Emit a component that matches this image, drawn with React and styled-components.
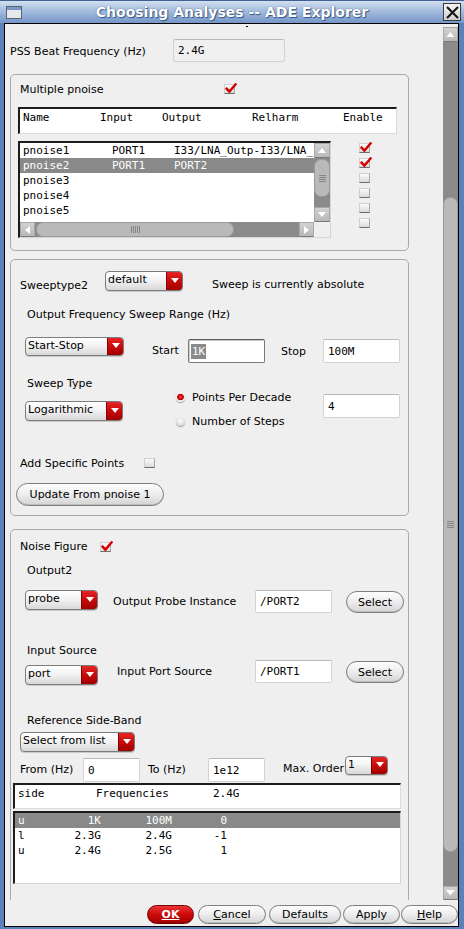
import React from "react";
import styled, { createGlobalStyle } from "styled-components";

const GlobalStyle = createGlobalStyle`
  html, body { margin: 0; padding: 0; }
  body {
    background: #5c80b8;
    font-family: "DejaVu Sans", "Liberation Sans", sans-serif;
    font-size: 11px;
    color: #000;
  }
  * { box-sizing: border-box; }
`;

const Window = styled.div`
  width: 464px;
  height: 929px;
  display: flex;
  flex-direction: column;
  overflow: hidden;
  background: #5c80b8;
`;

const TitleBar = styled.div`
  flex: none;
  height: 23px;
  display: grid;
  grid-template-columns: 1fr auto 1fr;
  align-items: center;
  background: linear-gradient(to bottom, #d3e0f0 0%, #a9c0e0 40%, #7596c8 100%);
  border-top: 1px solid #3f5f92;
`;

const TitleText = styled.div`
  font: bold 14px "DejaVu Sans", sans-serif;
  line-height: 22px;
  color: #fff;
  white-space: nowrap;
  text-shadow: 0 0 1px #2c4a78, 1px 1px 1px #3a5886;
`;

const IconSlot = styled.div`
  justify-self: start;
  margin-left: 6px;
  display: flex;
`;

const CloseBox = styled.div`
  justify-self: end;
  margin-right: 3px;
  width: 18px;
  height: 18px;
  display: flex;
  align-items: center;
  justify-content: center;
  border: 1px solid #3a3a3a;
  background: linear-gradient(to bottom, #f4f4f4, #cfcfcf);
`;

const FrameOuter = styled.div`
  flex: 1;
  min-height: 0;
  display: flex;
  flex-direction: column;
  padding: 0 5px 2px 4px;
`;

const Frame = styled.div`
  flex: 1;
  min-height: 0;
  display: flex;
  flex-direction: column;
  border: 1px solid #000;
  background: #efefef;
`;

const Main = styled.div`
  flex: none;
  height: 876px;
  display: flex;
`;

const Viewport = styled.div`
  flex: 1;
  min-width: 0;
  overflow: hidden;
  display: flex;
  flex-direction: column;
  align-items: flex-start;
`;

const ButtonBar = styled.div`
  flex: 1;
  display: flex;
  align-items: flex-start;
  justify-content: flex-end;
  padding-top: 5px;
`;

/* ---------- generic layout pieces ---------- */

const Row = styled.div`
  flex: none;
  display: flex;
  align-items: flex-start;
  height: ${(p) => (p.$h ? `${p.$h}px` : "auto")};
  margin: ${(p) => p.$mt || 0}px 0 0 ${(p) => p.$ml || 0}px;
`;

const Label = styled.span`
  flex: none;
  display: block;
  white-space: nowrap;
  font-size: 11px;
  line-height: 13px;
  width: ${(p) => (p.$w ? `${p.$w}px` : "auto")};
  margin: ${(p) => p.$mt || 0}px 0 0 ${(p) => p.$ml || 0}px;
`;

const Dot = styled.span`
  display: block;
  width: 2px;
  height: 1px;
  background: #000;
  margin: 2px 0 0 241px;
`;

const Section = styled.div`
  flex: none;
  width: 399px;
  height: ${(p) => p.$h}px;
  margin: ${(p) => p.$mt}px 0 0 5px;
  border: 1px solid #a9a9a9;
  border-radius: 5px;
  display: flex;
  flex-direction: column;
  align-items: flex-start;
`;

/* ---------- controls ---------- */

const Field = styled.div`
  flex: none;
  width: ${(p) => p.$w}px;
  height: ${(p) => p.$h || 23}px;
  margin: ${(p) => p.$mt || 0}px 0 0 ${(p) => p.$ml || 0}px;
  display: flex;
  align-items: center;
  padding-left: ${(p) => (p.$focus ? 2 : 4)}px;
  font: 11px "DejaVu Sans Mono", monospace;
  white-space: nowrap;
  background: ${(p) => (p.$ro ? "#f0f0f0" : "#fff")};
  border: 1px solid ${(p) => (p.$focus ? "#7a7a7a" : "#d2d2d2")};
  border-top-color: ${(p) => (p.$focus ? "#5a5a5a" : "#b8b8b8")};
  border-radius: ${(p) => (p.$ro ? 3 : 2)}px;
  box-shadow: ${(p) => (p.$focus ? "inset 1px 1px 0 #c8c8c8" : "none")};
`;

const SelText = styled.span`
  background: #8a8a8a;
  color: #fff;
  padding: 1px 1px;
`;

const Drop = styled.div`
  flex: none;
  display: flex;
  width: ${(p) => p.$w}px;
  height: ${(p) => p.$h || 20}px;
  margin: ${(p) => p.$mt || 0}px 0 0 ${(p) => p.$ml || 0}px;
  border: 1px solid #7c7c7c;
  border-radius: 4px;
  overflow: hidden;
  background: linear-gradient(to bottom, #ffffff 0%, #f3f3f3 45%, #d8d8d8 100%);
  box-shadow: 0 1px 0 #cacaca;
`;

const DropText = styled.span`
  flex: 1;
  min-width: 0;
  padding-left: 2px;
  font-size: 11px;
  line-height: ${(p) => p.$lh}px;
  white-space: nowrap;
  overflow: hidden;
`;

const DropBtn = styled.span`
  flex: none;
  width: 16px;
  display: flex;
  align-items: center;
  justify-content: center;
  padding-bottom: 2px;
  background: linear-gradient(to bottom, #e62626 0%, #c80a0a 50%, #a00000 100%);
  border-left: 1px solid #8a0000;
`;

const CheckBox = styled.span`
  flex: none;
  position: relative;
  display: block;
  width: 11px;
  height: 10px;
  margin: ${(p) => p.$mt || 0}px 0 0 ${(p) => p.$ml || 0}px;
  background: linear-gradient(to bottom, #fbfbfb, #dadada);
  border: 1px solid #d0d0d0;
  border-bottom-color: #6e6e6e;
  border-right-color: #a8a8a8;
  svg {
    position: absolute;
    left: 0px;
    top: -2px;
  }
`;

const RadioItem = styled.div`
  display: flex;
  align-items: center;
  height: 14px;
`;

const Radio = styled.span`
  flex: none;
  width: 9px;
  height: 9px;
  border-radius: 50%;
  background: ${(p) =>
    p.$on
      ? "radial-gradient(circle at 50% 45%, #ff5a5a 0, #e00000 2px, #b00000 3px, #f6f6f6 3.6px, #dadada 100%)"
      : "radial-gradient(circle at 50% 40%, #fdfdfd 0, #e8e8e8 3px, #c6c6c6 100%)"};
  box-shadow: 0 1px 1px rgba(0, 0, 0, 0.35);
`;

const RadioCol = styled.div`
  flex: none;
  width: ${(p) => p.$w}px;
  margin-left: ${(p) => p.$ml}px;
  display: flex;
  flex-direction: column;
  gap: 10px;
`;

const Pill = styled.button`
  flex: none;
  width: ${(p) => p.$w}px;
  height: ${(p) => p.$h || 19}px;
  margin: ${(p) => p.$mt || 0}px 0 0 ${(p) => p.$ml || 0}px;
  padding: 0;
  border: 1px solid ${(p) => (p.$primary ? "#7a0000" : "#7e7e7e")};
  border-radius: ${(p) => Math.round((p.$h || 19) / 2)}px;
  background: ${(p) =>
    p.$primary
      ? "linear-gradient(to bottom, #ea3434 0%, #cc0a0a 50%, #a60000 100%)"
      : "linear-gradient(to bottom, #fdfdfd 0%, #efefef 45%, #d4d4d4 100%)"};
  color: ${(p) => (p.$primary ? "#fff" : "#000")};
  font-family: "DejaVu Sans", sans-serif;
  font-size: 11px;
  font-weight: ${(p) => (p.$primary ? "bold" : "normal")};
  line-height: 1;
  box-shadow: inset 0 -1px 0 rgba(0, 0, 0, 0.12);
`;

/* ---------- scrollbars ---------- */

const VScrollCol = styled.div`
  flex: none;
  width: 15px;
  display: flex;
  flex-direction: column;
  padding-top: 3px;
`;

const ScrollBtn = styled.div`
  flex: none;
  width: ${(p) => p.$w || 15}px;
  height: ${(p) => p.$h || 15}px;
  display: flex;
  align-items: center;
  justify-content: center;
  background: linear-gradient(to bottom, #d2d2d2, #b8b8b8);
  border: 1px solid #a8a8a8;
  border-bottom-color: #7a7a7a;
`;

const Track = styled.div`
  flex: 1;
  min-width: 0;
  min-height: 0;
  display: flex;
  flex-direction: ${(p) => (p.$horiz ? "row" : "column")};
  background: #8b8b8b;
  padding: ${(p) => (p.$horiz ? `0 0 0 ${p.$off}px` : `${p.$off}px 0 0 0`)};
`;

const Thumb = styled.div`
  flex: none;
  ${(p) => (p.$horiz ? `width: ${p.$len}px; height: 100%;` : `height: ${p.$len}px; width: 100%;`)}
  display: flex;
  align-items: center;
  justify-content: center;
  background: #b9b9b9;
  border: 1px solid #9a9a9a;
  border-radius: 7px;
`;

/* ---------- list boxes ---------- */

const HeadBox = styled.div`
  flex: none;
  display: flex;
  width: ${(p) => p.$w}px;
  height: ${(p) => p.$h}px;
  margin: ${(p) => p.$mt || 0}px 0 0 ${(p) => p.$ml || 0}px;
  padding: 2px 0 0 3px;
  background: #fff;
  border-top: 2px solid #1c1c1c;
  border-left: 2px solid #1c1c1c;
  border-right: 1px solid #dadada;
  border-bottom: 1px solid #dadada;
  font: 11px "DejaVu Sans Mono", monospace;
  line-height: 13px;
`;

const Cell = styled.span`
  flex: none;
  display: block;
  width: ${(p) => (p.$w ? `${p.$w}px` : "auto")};
  padding-left: ${(p) => p.$pl || 0}px;
  text-align: ${(p) => (p.$right ? "right" : "left")};
  white-space: nowrap;
`;

const ListBox = styled.div`
  flex: none;
  display: flex;
  width: ${(p) => p.$w}px;
  height: ${(p) => p.$h}px;
  margin: ${(p) => p.$mt || 0}px 0 0 ${(p) => p.$ml || 0}px;
  background: #fff;
  border-top: 2px solid #1c1c1c;
  border-left: 2px solid #1c1c1c;
  border-right: 1px solid #d6d6d6;
  border-bottom: 1px solid #d6d6d6;
  font: 11px "DejaVu Sans Mono", monospace;
`;

const ListMain = styled.div`
  flex: 1;
  min-width: 0;
  display: flex;
  flex-direction: column;
`;

const Rows = styled.div`
  flex: 1;
  min-height: 0;
  overflow: hidden;
`;

const ListRow = styled.div`
  display: flex;
  height: 15px;
  line-height: 16px;
  background: ${(p) => (p.$sel ? "#898989" : "transparent")};
  color: ${(p) => (p.$sel ? "#fff" : "#000")};
`;

const HBar = styled.div`
  flex: none;
  height: 15px;
  display: flex;
`;

const ListSide = styled.div`
  flex: none;
  width: 16px;
  display: flex;
  flex-direction: column;
`;

const Corner = styled.div`
  flex: none;
  height: 15px;
  background: #efefef;
`;

const EnableCol = styled.div`
  flex: none;
  display: flex;
  flex-direction: column;
  gap: 5px;
  margin: 2px 0 0 28px;
`;

/* ---------- drawings ---------- */

const Tri = ({ dir = "down", s = 1, color = "#fff" }) => {
  const vert = dir === "up" || dir === "down";
  const pts = {
    down: "0,0 8,0 4,5",
    up: "0,5 8,5 4,0",
    left: "5,0 5,8 0,4",
    right: "0,0 0,8 5,4",
  }[dir];
  const w = vert ? 8 : 5;
  const h = vert ? 5 : 8;
  return (
    <svg width={w * s} height={h * s} viewBox={`0 0 ${w} ${h}`}>
      <polygon points={pts} fill={color} />
    </svg>
  );
};

const Tick = () => (
  <svg width="12" height="11" viewBox="0 0 12 11">
    <path d="M1.6 5.6 L4.4 8.6 L10.6 1.4" fill="none" stroke="#d40000" strokeWidth="2.4" strokeLinecap="square" />
  </svg>
);

const GripH = () => (
  <svg width="7" height="7" viewBox="0 0 7 7">
    {[0.5, 2.5, 4.5, 6.5].map((y) => (
      <line key={y} x1="0" x2="7" y1={y} y2={y} stroke="#858585" strokeWidth="1" />
    ))}
  </svg>
);

const GripV = () => (
  <svg width="9" height="7" viewBox="0 0 9 7">
    {[0.5, 2.5, 4.5, 6.5, 8.5].map((x) => (
      <line key={x} y1="0" y2="7" x1={x} x2={x} stroke="#858585" strokeWidth="1" />
    ))}
  </svg>
);

const WinIcon = () => (
  <svg width="16" height="13" viewBox="0 0 16 13">
    <rect x="0.5" y="0.5" width="15" height="12" fill="#e6e8ec" stroke="#55657e" />
    <rect x="1" y="1" width="14" height="3" fill="#7e97bf" />
  </svg>
);

const CloseX = () => (
  <svg width="13" height="13" viewBox="0 0 13 13">
    <path d="M1 1 L12 12 M12 1 L1 12" stroke="#111" strokeWidth="2" />
  </svg>
);

/* ---------- small composites ---------- */

const Dropdown = ({ w, h = 20, mt, ml, children }) => (
  <Drop $w={w} $h={h} $mt={mt} $ml={ml}>
    <DropText $lh={h - 4}>{children}</DropText>
    <DropBtn>
      <Tri dir="down" />
    </DropBtn>
  </Drop>
);

const Check = ({ on, mt, ml }) => (
  <CheckBox $mt={mt} $ml={ml}>
    {on && <Tick />}
  </CheckBox>
);

const pnoiseRows = [
  ["pnoise1", "PORT1", "I33/LNA_Outp-I33/LNA_"],
  ["pnoise2", "PORT1", "PORT2"],
  ["pnoise3", "", ""],
  ["pnoise4", "", ""],
  ["pnoise5", "", ""],
];

const sideRows = [
  ["u", "1K", "100M", "0"],
  ["l", "2.3G", "2.4G", "-1"],
  ["u", "2.4G", "2.5G", "1"],
];

export default function App() {
  return (
    <Window>
      <GlobalStyle />
      <TitleBar>
        <IconSlot>
          <WinIcon />
        </IconSlot>
        <TitleText>Choosing Analyses -- ADE Explorer</TitleText>
        <CloseBox>
          <CloseX />
        </CloseBox>
      </TitleBar>

      <FrameOuter>
        <Frame>
          <Main>
            <Viewport>
              <Row $h={3}>
                <Dot />
              </Row>

              <Row $mt={12} $h={23}>
                <Label $ml={5} $w={163} $mt={6}>PSS Beat Frequency (Hz)</Label>
                <Field $ro $w={112}>2.4G</Field>
              </Row>

              {/* Multiple pnoise */}
              <Section $mt={12} $h={177}>
                <Row $mt={9} $h={11}>
                  <Label $ml={9} $w={204} $mt={-1}>Multiple pnoise</Label>
                  <Check on />
                </Row>
                <HeadBox $mt={12} $ml={7} $w={379} $h={27}>
                  <Cell $w={77}>Name</Cell>
                  <Cell $w={62}>Input</Cell>
                  <Cell $w={90}>Output</Cell>
                  <Cell $w={91}>Relharm</Cell>
                  <Cell>Enable</Cell>
                </HeadBox>
                <Row $mt={7} $ml={7}>
                  <ListBox $w={313} $h={97}>
                    <ListMain>
                      <Rows>
                        {pnoiseRows.map((r, i) => (
                          <ListRow key={r[0]} $sel={i === 1}>
                            <Cell $w={92} $pl={3}>{r[0]}</Cell>
                            <Cell $w={62}>{r[1]}</Cell>
                            <Cell>{r[2]}</Cell>
                          </ListRow>
                        ))}
                      </Rows>
                      <HBar>
                        <ScrollBtn>
                          <Tri dir="left" />
                        </ScrollBtn>
                        <Track $horiz $off={1}>
                          <Thumb $horiz $len={198}>
                            <GripV />
                          </Thumb>
                        </Track>
                        <ScrollBtn>
                          <Tri dir="right" />
                        </ScrollBtn>
                      </HBar>
                    </ListMain>
                    <ListSide>
                      <ScrollBtn $w={16}>
                        <Tri dir="up" />
                      </ScrollBtn>
                      <Track $off={1}>
                        <Thumb $len={38}>
                          <GripH />
                        </Thumb>
                      </Track>
                      <ScrollBtn $w={16}>
                        <Tri dir="down" />
                      </ScrollBtn>
                      <Corner />
                    </ListSide>
                  </ListBox>
                  <EnableCol>
                    <Check on />
                    <Check on />
                    <Check />
                    <Check />
                    <Check />
                    <Check />
                  </EnableCol>
                </Row>
              </Section>

              {/* Sweep */}
              <Section $mt={8} $h={257}>
                <Row $mt={11} $h={20}>
                  <Label $ml={9} $w={85} $mt={8}>Sweeptype2</Label>
                  <Dropdown w={78}>default</Dropdown>
                  <Label $ml={29} $mt={7}>Sweep is currently absolute</Label>
                </Row>
                <Label $mt={17} $ml={16}>Output Frequency Sweep Range (Hz)</Label>
                <Row $mt={16} $h={25}>
                  <Dropdown w={99} h={19} ml={14}>Start-Stop</Dropdown>
                  <Label $ml={28} $w={36} $mt={7}>Start</Label>
                  <Field $focus $w={77} $h={24} $mt={2}>
                    <SelText>1K</SelText>
                  </Field>
                  <Label $ml={16} $w={42} $mt={8}>Stop</Label>
                  <Field $w={77} $h={24} $mt={2}>100M</Field>
                </Row>
                <Label $mt={15} $ml={16}>Sweep Type</Label>
                <Row $h={38}>
                  <Dropdown w={98} ml={14} mt={11}>Logarithmic</Dropdown>
                  <RadioCol $w={147} $ml={53}>
                    <RadioItem>
                      <Radio $on />
                      <Label $ml={7}>Points Per Decade</Label>
                    </RadioItem>
                    <RadioItem>
                      <Radio />
                      <Label $ml={7}>Number of Steps</Label>
                    </RadioItem>
                  </RadioCol>
                  <Field $w={77} $h={24} $mt={4}>4</Field>
                </Row>
                <Row $mt={29} $h={12}>
                  <Label $ml={9} $w={124} $mt={0}>Add Specific Points</Label>
                  <Check mt={1} />
                </Row>
                <Pill $ml={5} $mt={14} $w={148} $h={23}>Update From pnoise 1</Pill>
              </Section>

              {/* Noise figure */}
              <Section $mt={13} $h={380}>
                <Row $mt={10} $h={13}>
                  <Label $ml={9} $w={80}>Noise Figure</Label>
                  <Check on mt={2} />
                </Row>
                <Label $mt={11} $ml={16}>Output2</Label>
                <Row $mt={13} $h={23}>
                  <Dropdown w={73} ml={14}>probe</Dropdown>
                  <Label $ml={15} $w={142} $mt={5}>Output Probe Instance</Label>
                  <Field $w={77}>/PORT2</Field>
                  <Pill $ml={14} $mt={1} $w={58} $h={22}>Select</Pill>
                </Row>
                <Label $mt={31} $ml={16}>Input Source</Label>
                <Row $mt={3} $h={24}>
                  <Dropdown w={73} ml={14} mt={5}>port</Dropdown>
                  <Label $ml={19} $w={138} $mt={5}>Input Port Source</Label>
                  <Field $w={77}>/PORT1</Field>
                  <Pill $ml={14} $mt={1} $w={58} $h={22}>Select</Pill>
                </Row>
                <Label $mt={30} $ml={16}>Reference Side-Band</Label>
                <Dropdown w={115} ml={9} mt={5}>Select from list</Dropdown>
                <Row $mt={4} $h={26}>
                  <Label $ml={9} $w={63} $mt={7}>From (Hz)</Label>
                  <Field $w={57} $h={24} $mt={2}>0</Field>
                  <Label $ml={8} $w={60} $mt={7}>To (Hz)</Label>
                  <Field $w={57} $h={24} $mt={2}>1e12</Field>
                  <Label $ml={18} $w={62} $mt={6}>Max. Order</Label>
                  <Dropdown w={43} h={19}>1</Dropdown>
                </Row>
                <HeadBox $mt={1} $ml={2} $w={388} $h={26}>
                  <Cell $w={78}>side</Cell>
                  <Cell $w={117}>Frequencies</Cell>
                  <Cell>2.4G</Cell>
                </HeadBox>
                <ListBox $mt={2} $ml={2} $w={388} $h={73}>
                  <Rows>
                    {sideRows.map((r, i) => (
                      <ListRow key={i} $sel={i === 0}>
                        <Cell $w={45} $pl={3}>{r[0]}</Cell>
                        <Cell $w={41} $right>{r[1]}</Cell>
                        <Cell $w={71} $right>{r[2]}</Cell>
                        <Cell $w={55} $right>{r[3]}</Cell>
                      </ListRow>
                    ))}
                  </Rows>
                </ListBox>
              </Section>
            </Viewport>

            <VScrollCol>
              <ScrollBtn>
                <Tri dir="up" s={1.1} />
              </ScrollBtn>
              <Track $off={155}>
                <Thumb $len={655}>
                  <GripH />
                </Thumb>
              </Track>
              <ScrollBtn $h={14}>
                <Tri dir="down" s={1.1} />
              </ScrollBtn>
            </VScrollCol>
          </Main>

          <ButtonBar>
            <Pill $primary $w={47}>
              <u>OK</u>
            </Pill>
            <Pill $w={68} $ml={4}>
              <u>C</u>ancel
            </Pill>
            <Pill $w={72} $ml={3}>Defaults</Pill>
            <Pill $w={57} $ml={2}>Apply</Pill>
            <Pill $w={57} $ml={1}>
              <u>H</u>elp
            </Pill>
          </ButtonBar>
        </Frame>
      </FrameOuter>
    </Window>
  );
}
